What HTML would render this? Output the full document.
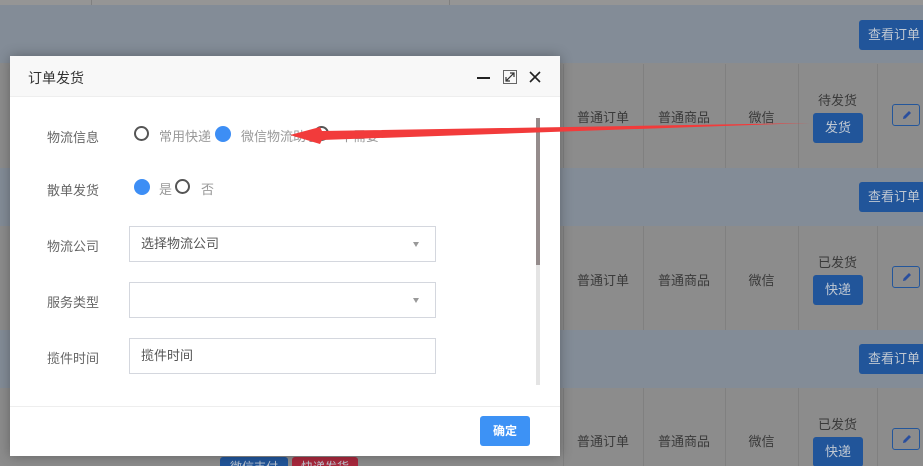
<!DOCTYPE html>
<html style="overflow:hidden;width:923px;height:466px"><head><meta charset="utf-8"><style>
*{margin:0;padding:0;box-sizing:border-box}
body{width:923px;height:466px;overflow:hidden;background:#8c8c8c;font-family:"Liberation Sans","Noto Sans CJK SC",sans-serif;position:relative;font-size:13px}
.a{position:absolute}
.band{position:absolute;left:0;width:923px;height:58px;background:#838c97}
.vl{position:absolute;width:1px;background:#808080}
.cell{position:absolute;color:#3a3a3a;font-size:13px;text-align:center}
.bb{position:absolute;background:#21559a;color:#c0c8d2;border-radius:3px;text-align:center;font-size:13px}
.ed{position:absolute;width:28px;height:22px;border:1px solid #23569b;border-radius:3px}
.modal{position:absolute;left:10px;top:56px;width:550px;height:400px;background:#fff;box-shadow:0 0 12px rgba(0,0,0,.3)}
.hd{height:41px;background:#f8f8f8;border-bottom:1px solid #eee;position:relative}
.lbl{position:absolute;left:37px;color:#666;font-size:13px}
.inp{position:absolute;left:119px;width:307px;height:36px;border:1px solid #d4d7de;color:#555;font-size:13px;line-height:34px;padding-left:11px}
.tri{position:absolute;right:16px;top:15px;width:0;height:0;border-left:3.5px solid transparent;border-right:3.5px solid transparent;border-top:5px solid #999}
.ro{position:absolute;width:15px;height:15px;border:2px solid #555;border-radius:50%}
.rf{position:absolute;width:16px;height:16px;background:#3d8ef5;border-radius:50%}
.rt{position:absolute;color:#999;font-size:13px}
</style></head><body>
<div class="a" style="left:0;top:0;width:923px;height:5px;background:#959595"></div>
<div class="band" style="top:5px"></div>
<div class="band" style="top:168px"></div>
<div class="band" style="top:330px"></div>
<div class="vl" style="left:91px;top:0;height:5px"></div>
<div class="vl" style="left:449px;top:0;height:5px"></div>
<div class="vl" style="left:563px;top:64px;height:104px"></div><div class="vl" style="left:643px;top:64px;height:104px"></div><div class="vl" style="left:725px;top:64px;height:104px"></div><div class="vl" style="left:798px;top:64px;height:104px"></div><div class="vl" style="left:877px;top:64px;height:104px"></div>
<div class="vl" style="left:563px;top:226px;height:104px"></div><div class="vl" style="left:643px;top:226px;height:104px"></div><div class="vl" style="left:725px;top:226px;height:104px"></div><div class="vl" style="left:798px;top:226px;height:104px"></div><div class="vl" style="left:877px;top:226px;height:104px"></div>
<div class="vl" style="left:563px;top:388px;height:78px"></div><div class="vl" style="left:643px;top:388px;height:78px"></div><div class="vl" style="left:725px;top:388px;height:78px"></div><div class="vl" style="left:798px;top:388px;height:78px"></div><div class="vl" style="left:877px;top:388px;height:78px"></div>
<div class="bb" style="left:859px;top:20px;width:70px;height:30px;line-height:30px">查看订单</div>
<div class="bb" style="left:859px;top:182px;width:70px;height:30px;line-height:30px">查看订单</div>
<div class="bb" style="left:859px;top:344px;width:70px;height:30px;line-height:30px">查看订单</div>
<div class="cell" style="left:563px;top:107px;width:80px">普通订单</div><div class="cell" style="left:643px;top:107px;width:82px">普通商品</div><div class="cell" style="left:725px;top:107px;width:73px">微信</div>
<div class="cell" style="left:798px;top:90px;width:79px">待发货</div>
<div class="bb" style="left:813px;top:113px;width:50px;height:30px;line-height:30px">发货</div>
<div class="ed" style="left:892px;top:104px"><svg class="a" style="left:8px;top:4px" width="12" height="12" viewBox="0 0 12 12"><path d="M2 10L2.5 7.5L8 2L10 4L4.5 9.5Z" fill="#2a4f9e"/></svg></div>
<div class="cell" style="left:563px;top:270px;width:80px">普通订单</div><div class="cell" style="left:643px;top:270px;width:82px">普通商品</div><div class="cell" style="left:725px;top:270px;width:73px">微信</div>
<div class="cell" style="left:798px;top:252px;width:79px">已发货</div>
<div class="bb" style="left:813px;top:275px;width:50px;height:30px;line-height:30px">快递</div>
<div class="ed" style="left:892px;top:266px"><svg class="a" style="left:8px;top:4px" width="12" height="12" viewBox="0 0 12 12"><path d="M2 10L2.5 7.5L8 2L10 4L4.5 9.5Z" fill="#2a4f9e"/></svg></div>
<div class="cell" style="left:563px;top:431px;width:80px">普通订单</div><div class="cell" style="left:643px;top:431px;width:82px">普通商品</div><div class="cell" style="left:725px;top:431px;width:73px">微信</div>
<div class="cell" style="left:798px;top:414px;width:79px">已发货</div>
<div class="bb" style="left:813px;top:437px;width:50px;height:30px;line-height:30px">快递</div>
<div class="ed" style="left:892px;top:428px"><svg class="a" style="left:8px;top:4px" width="12" height="12" viewBox="0 0 12 12"><path d="M2 10L2.5 7.5L8 2L10 4L4.5 9.5Z" fill="#2a4f9e"/></svg></div>
<div class="bb" style="left:220px;top:457px;width:68px;height:20px;font-size:12px;line-height:20px">微信支付</div>
<div class="bb" style="left:292px;top:457px;width:66px;height:20px;background:#a8283c;font-size:12px;line-height:20px">快递发货</div>
<div class="modal">
 <div class="hd"><span class="a" style="left:18px;top:12px;font-size:14px;color:#333">订单发货</span>
  <div class="a" style="left:467px;top:21px;width:13px;height:2px;background:#222"></div>
  <svg class="a" style="left:493px;top:14px" width="14" height="14" viewBox="0 0 14 14"><rect x=".5" y=".5" width="13" height="13" fill="none" stroke="#666"/><path d="M3 11L11 3M7 3h4v4M3 7v4h4" fill="none" stroke="#333" stroke-width="1.2"/></svg>
  <svg class="a" style="left:519px;top:15px" width="12" height="12" viewBox="0 0 12 12"><path d="M1 1L11 11M11 1L1 11" stroke="#222" stroke-width="1.6"/></svg>
 </div>
 <div class="lbl" style="top:71px">物流信息</div>
 <div class="ro" style="left:124px;top:70px"></div><div class="rt" style="left:149px;top:70px">常用快递</div>
 <div class="rf" style="left:205px;top:70px"></div><div class="rt" style="left:231px;top:70px">微信物流助手</div>
 <div class="ro" style="left:304px;top:70px"></div><div class="rt" style="left:330px;top:70px">不需要</div>
 <div class="lbl" style="top:124px">散单发货</div>
 <div class="rf" style="left:124px;top:123px"></div><div class="rt" style="left:149px;top:123px">是</div>
 <div class="ro" style="left:165px;top:123px"></div><div class="rt" style="left:191px;top:123px">否</div>
 <div class="lbl" style="top:180px">物流公司</div>
 <div class="inp" style="top:170px">选择物流公司<div class="tri"></div></div>
 <div class="lbl" style="top:236px">服务类型</div>
 <div class="inp" style="top:226px"><div class="tri"></div></div>
 <div class="lbl" style="top:292px">揽件时间</div>
 <div class="inp" style="top:282px">揽件时间</div>
 <div class="a" style="left:526px;top:62px;width:4px;height:267px;background:#e4e4e4"></div>
 <div class="a" style="left:526px;top:62px;width:4px;height:147px;background:#958c8c"></div>
 <div class="a" style="left:0;top:350px;width:550px;height:1px;background:#eee"></div>
 <div class="a" style="left:470px;top:360px;width:50px;height:30px;background:#3d92f5;border-radius:3px;color:#fff;font-size:12px;font-weight:bold;text-align:center;line-height:30px">确定</div>
</div>
<svg class="a" style="left:0;top:0" width="923" height="466"><path d="M810 123 L322 131 L320 127 L290 135 L320 144 L322 140 Z" fill="#f23b3b"/></svg>
</body></html>
